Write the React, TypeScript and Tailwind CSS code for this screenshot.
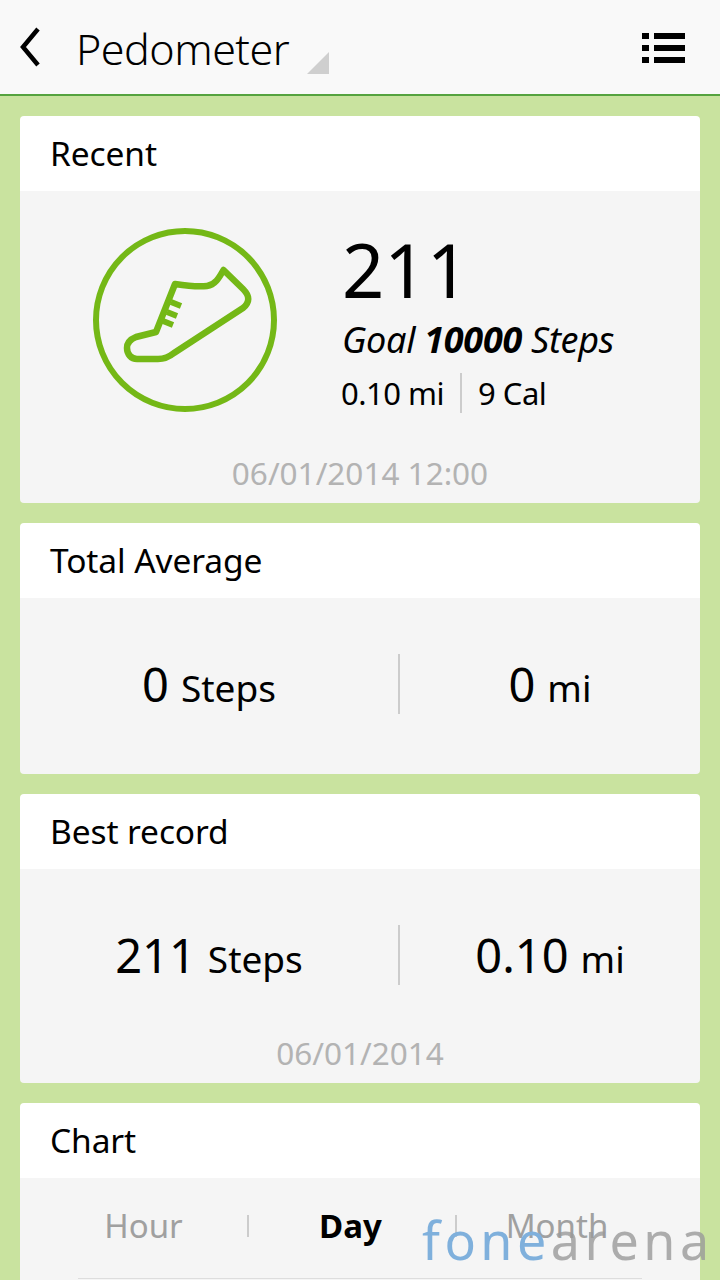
import React from "react";

const font = { fontFamily: '"Noto Sans", "Open Sans", sans-serif' };

const Shoe = () => (
	<svg viewBox="0 0 210 210" className="w-[210px] h-[210px] shrink-0" fill="none" stroke="#74b816">
		<circle cx="105" cy="105" r="89" strokeWidth="6" />
		<path
			d="M95 69 C108 71 118 72 127 71 C135 70 139 63 143.500 55 L163 74 C170 81 170 87 163 93 L94 138 C89 142 85 144 78 144 L57 144 C51 144 47 139 47 133 C47 127 51 124 56 122 L76 117 Z"
			strokeWidth="6.500"
			strokeLinejoin="round"
		/>
		<path d="M91 87 L101 91 M87 97 L97 101 M83 106 L93 110" strokeWidth="6" />
	</svg>
);

const Card = ({ title, className, children }: { title: string; className: string; children: React.ReactNode }) => (
	<div className="rounded-[4px] overflow-hidden shrink-0">
		<div className="h-[75px] bg-white flex items-center pl-[30px] text-[33.500px] text-black tracking-[-0.1px]">{title}</div>
		<div className={`bg-[#f5f5f5] ${className}`}>{children}</div>
	</div>
);

const Stat = ({ value, unit }: { value: string; unit: string }) => (
	<span className="text-black whitespace-nowrap">
		<span className="text-[47px]">{value}</span>
		<span className="text-[37px] ml-3">{unit}</span>
	</span>
);

export default function App() {
	return (
		<div className="relative w-[720px] h-[1280px] overflow-hidden bg-[#c9e39f]" style={font}>
			{/* Action bar */}
			<div className="h-[96px] bg-[#f9f9f9] border-b-2 border-[#55a33f] flex items-center justify-between">
				<div className="flex items-center">
					<svg viewBox="0 0 24 40" className="w-[24px] h-[40px] ml-[18px]" fill="none" stroke="#000" strokeWidth="4.500">
						<path d="M20 2 L5 20 L20 38" />
					</svg>
					<span className="ml-[34px] mt-[2px] text-[43px] font-light text-black tracking-[-0.5px] leading-none">Pedometer</span>
					<div className="w-0 h-0 ml-[18px] mt-[32px] border-l-[22px] border-l-transparent border-b-[22px] border-b-[#cfcfcf]" />
				</div>
				<div className="mr-[35px] mt-[2px] flex flex-col gap-[6px]">
					{[0, 1, 2].map((i) => (
						<div key={i} className="flex gap-[5px]">
							<div className="w-[7px] h-[6px] bg-black" />
							<div className="w-[31px] h-[6px] bg-black" />
						</div>
					))}
				</div>
			</div>

			<div className="px-[20px] pt-[20px] flex flex-col gap-[20px]">
				<Card title="Recent" className="h-[312px] flex flex-col">
					<div className="flex items-start">
						<div className="ml-[60px] mt-[24px]">
							<Shoe />
						</div>
						<div className="ml-[51px] text-black">
							<div className="text-[74px] leading-none mt-[42px] ml-[1px]">211</div>
							<div className="text-[36px] italic leading-none mt-[15px] ml-[1px] tracking-[-0.3px] whitespace-nowrap">
								Goal <b className="font-bold">10000</b> Steps
							</div>
							<div className="flex items-center text-[31px] mt-[14px] h-[42px] tracking-[-0.5px]">
								<span>0.10 mi</span>
								<div className="w-[2px] h-[40px] bg-[#cccccc] mx-[16px]" />
								<span>9 Cal</span>
							</div>
						</div>
					</div>
					<div className="text-center text-[31.500px] text-[#b3b3b3] mt-auto mb-[15px] leading-none">06/01/2014 12:00</div>
				</Card>

				<Card title="Total Average" className="h-[176px] flex items-center pb-[4px]">
					<div className="w-[378px] text-center"><Stat value="0" unit="Steps" /></div>
					<div className="w-[2px] h-[60px] bg-[#cccccc]" />
					<div className="flex-1 text-center"><Stat value="0" unit="mi" /></div>
				</Card>

				<Card title="Best record" className="h-[214px] flex flex-col">
					<div className="flex items-center mt-[51px]">
						<div className="w-[378px] text-center"><Stat value="211" unit="Steps" /></div>
						<div className="w-[2px] h-[60px] bg-[#cccccc]" />
						<div className="flex-1 text-center"><Stat value="0.10" unit="mi" /></div>
					</div>
					<div className="text-center text-[31.500px] text-[#b3b3b3] mt-auto mb-[15px] leading-none">06/01/2014</div>
				</Card>

				<Card title="Chart" className="h-[110px]">
					<div className="flex items-center h-[100px] pb-[4px] text-[33px] text-[#a0a0a0]">
						<div className="w-[227px] text-center pl-[20px]">Hour</div>
						<div className="w-[2px] h-[22px] bg-[#cccccc]" />
						<div className="w-[206px] text-center font-bold text-black pr-[3px]">Day</div>
						<div className="w-[2px] h-[22px] bg-[#cccccc]" />
						<div className="w-[206px] text-center pr-[6px]">Month</div>
					</div>
					<div className="mx-[58px] h-[1px] bg-[#dddddd]" />
				</Card>
			</div>

			{/* Watermark */}
			<div className="absolute left-[422px] top-[1214px] text-[52px] leading-none tracking-[4.500px] whitespace-nowrap">
				<span className="text-[#7fb0dc]">fone</span>
				<span className="text-[#9a9a9a]/80">arena</span>
			</div>
		</div>
	);
}
